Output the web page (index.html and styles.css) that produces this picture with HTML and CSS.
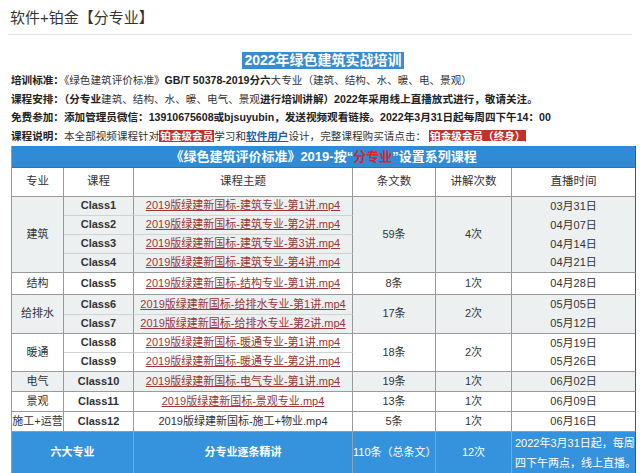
FILE: index.html
```html
<!DOCTYPE html>
<html lang="zh-CN">
<head>
<meta charset="utf-8">
<title>软件+铂金【分专业】</title>
<link rel="stylesheet" href="styles.css">
</head>
<body>
<div class="page">
  <h1 class="page-title">软件+铂金【分专业】</h1>
  <div class="banner-wrap"><span class="banner">2022年绿色建筑实战培训</span></div>
  <div class="info">
    <p><b>培训标准：</b>《绿色建筑评价标准》<b>GB/T 50378-2019分六</b>大专业（建筑、结构、水、暖、电、景观）</p>
    <p><b>课程安排：（分专业</b>建筑、结构、水、暖、电气、景观<b>进行培训讲解）2022年采用线上直播放式进行，敬请关注。</b></p>
    <p><b>免费参加：添加管理员微信：13910675608或bjsuyubin，发送视频观看链接。2022年3月31日起每周四下午14：00</b></p>
    <p><b>课程说明：</b>本全部视频课程针对<span class="tag">铂金级会员</span>学习和<a class="soft" href="#">软件用户</a>设计，完整课程购买请点击： <a class="tag tag-link" href="#">铂金级会员（终身）</a></p>
  </div>
  <table class="course">
    <colgroup>
      <col class="c1"><col class="c2"><col class="c3"><col class="c4"><col class="c5"><col class="c6">
    </colgroup>
    <thead>
      <tr class="cap-row"><th colspan="6">《绿色建筑评价标准》2019-按“<span class="red">分专业</span>”设置系列课程</th></tr>
      <tr class="head-row"><th>专业</th><th>课程</th><th>课程主题</th><th>条文数</th><th>讲解次数</th><th class="last">直播时间</th></tr>
    </thead>
    <tbody>
      <tr class="r19 shade">
        <td rowspan="4">建筑</td><td class="cls mid">Class1</td><td class="mid"><a href="#">2019版绿建新国标-建筑专业-第1讲.mp4</a></td>
        <td rowspan="4">59条</td><td rowspan="4">4次</td><td class="last cont">03月31日</td>
      </tr>
      <tr class="r19 shade"><td class="cls mid">Class2</td><td class="mid"><a href="#">2019版绿建新国标-建筑专业-第2讲.mp4</a></td><td class="last cont">04月07日</td></tr>
      <tr class="r19 shade"><td class="cls mid">Class3</td><td class="mid"><a href="#">2019版绿建新国标-建筑专业-第3讲.mp4</a></td><td class="last cont">04月14日</td></tr>
      <tr class="r19 shade"><td class="cls">Class4</td><td><a href="#">2019版绿建新国标-建筑专业-第4讲.mp4</a></td><td class="last">04月21日</td></tr>

      <tr class="r22">
        <td>结构</td><td class="cls">Class5</td><td><a href="#">2019版绿建新国标-结构专业-第1讲.mp4</a></td><td>8条</td><td>1次</td><td class="last">04月28日</td>
      </tr>

      <tr class="r20 shade">
        <td rowspan="2">给排水</td><td class="cls mid">Class6</td><td class="mid"><a href="#">2019版绿建新国标-给排水专业-第1讲.mp4</a></td>
        <td rowspan="2">17条</td><td rowspan="2">2次</td><td class="last cont">05月05日</td>
      </tr>
      <tr class="r19 shade"><td class="cls">Class7</td><td><a href="#">2019版绿建新国标-给排水专业-第2讲.mp4</a></td><td class="last">05月12日</td></tr>

      <tr class="r19">
        <td rowspan="2">暖通</td><td class="cls mid">Class8</td><td class="mid"><a href="#">2019版绿建新国标-暖通专业-第1讲.mp4</a></td>
        <td rowspan="2">18条</td><td rowspan="2">2次</td><td class="last cont">05月19日</td>
      </tr>
      <tr class="r19"><td class="cls">Class9</td><td><a href="#">2019版绿建新国标-暖通专业-第2讲.mp4</a></td><td class="last">05月26日</td></tr>

      <tr class="r20 shade">
        <td>电气</td><td class="cls">Class10</td><td><a href="#">2019版绿建新国标-电气专业-第1讲.mp4</a></td><td>19条</td><td>1次</td><td class="last">06月02日</td>
      </tr>
      <tr class="r20">
        <td>景观</td><td class="cls">Class11</td><td><a href="#">2019版绿建新国标-景观专业.mp4</a></td><td>13条</td><td>1次</td><td class="last">06月09日</td>
      </tr>
      <tr class="r20">
        <td>施工+运营</td><td class="cls">Class12</td><td>2019版绿建新国标-施工+物业.mp4</td><td>5条</td><td>1次</td><td class="last">06月16日</td>
      </tr>
    </tbody>
    <tfoot>
      <tr class="foot-row">
        <td colspan="2" class="strong">六大专业</td>
        <td class="strong">分专业逐条精讲</td>
        <td>110条（总条文）</td>
        <td>12次</td>
        <td class="last note">2022年3月31日起，每周<br>四下午两点，线上直播。</td>
      </tr>
    </tfoot>
  </table>
</div>
</body>
</html>
```

FILE: styles.css
```css
* {
  box-sizing: border-box;
}

html,
body {
  margin: 0;
  padding: 0;
  background: #fff;
}

body {
  font-family: "Liberation Sans", "Noto Sans CJK SC", sans-serif;
  font-size: 11px;
  color: #333;
}

.page {
  padding: 0 8px;
}

.page-title {
  margin: 0;
  padding: 6px 0 4px 2px;
  font-size: 15px;
  font-weight: normal;
  line-height: 24px;
  color: #333;
  border-bottom: 1px solid #e6e6e6;
}

.banner-wrap {
  margin-top: 17px;
  height: 17px;
  line-height: 17px;
  text-align: center;
  padding-left: 6px;
}

.banner {
  display: inline-block;
  background: #3a8bcf;
  color: #fff;
  font-weight: bold;
  font-size: 14px;
  line-height: 17px;
  padding: 0 2px;
}

.info {
  padding-left: 3px;
  margin-top: 2px;
  font-size: 10.6px;
}

.info p {
  margin: 0;
  line-height: 18.7px;
  white-space: nowrap;
}

.info b {
  color: #222;
}

.tag {
  background: #c0312b;
  color: #fff;
  font-weight: bold;
  padding: 0 1px;
}

.tag-link {
  text-decoration: underline;
}

.soft {
  color: #1d5fa6;
  font-weight: bold;
  text-decoration: underline;
}

.course {
  margin-left: 3px;
  width: 624px;
  table-layout: fixed;
  border-collapse: separate;
  border-spacing: 0;
  border-left: 1px solid #9a9a9a;
}

.c1 { width: 52px; }
.c2 { width: 70px; }
.c3 { width: 219px; }
.c4 { width: 83px; }
.c5 { width: 76px; }
.c6 { width: 124px; }

.course th,
.course td {
  padding: 0;
  text-align: center;
  vertical-align: middle;
  white-space: nowrap;
  border-right: 1px solid #9a9a9a;
  border-bottom: 1px solid #9a9a9a;
  line-height: 17px;
}

.course .last {
  border-right-color: #555;
}

.cap-row {
  height: 22px;
}

.cap-row th {
  background: #2f8bd6;
  color: #fff;
  font-size: 13px;
  font-weight: bold;
  border-right-color: #555;
  border-bottom-color: #666;
}

.red {
  color: #d8262a;
}

.head-row {
  height: 29px;
}

.head-row th {
  font-weight: normal;
  font-size: 11.5px;
  background: #fff;
}

.r19 { height: 19px; }
.r20 { height: 20px; }
.r22 { height: 22px; }

.shade td {
  background: #edf0f1;
}

.course td.mid {
  border-bottom-color: #d2d2d2;
}

.course td.cont {
  border-bottom: 0;
}

.cls {
  font-weight: bold;
  color: #333;
}

.course a {
  color: #9a3636;
  text-decoration: underline;
}

.foot-row {
  height: 42px;
}

.foot-row td {
  background: #3592dc;
  color: #fff;
  border-right-color: #8aa3b8;
  border-bottom: 0;
}

.foot-row .strong {
  font-weight: bold;
}

.foot-row .note {
  text-align: left;
  padding-left: 3px;
  line-height: 20px;
}
```
